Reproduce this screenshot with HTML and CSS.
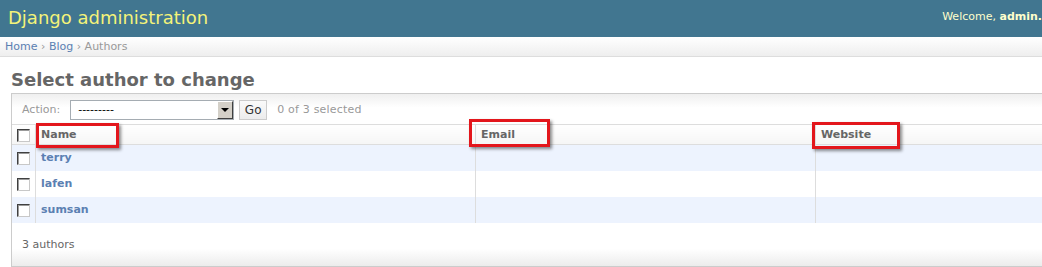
FILE: index.html
```html
<!DOCTYPE html>
<html lang="en">
<head>
    <meta charset="UTF-8">
    <title>Select author to change | Django site admin</title>
    <link rel="stylesheet" href="styles.css">
</head>
<body>
    <div class="header">
        <div class="branding">Django administration</div>
        <div class="user-tools">Welcome, <strong>admin.</strong></div>
    </div>
    <div class="breadcrumbs">
        <a href="#">Home</a> &rsaquo; <a href="#">Blog</a> &rsaquo; Authors
    </div>
    <div class="content">
        <h1>Select author to change</h1>
        <div class="module">
            <div class="actions">
                <span class="action-label">Action:</span>
                <span class="select">---------<span class="select-arrow"></span></span>
                <button class="go">Go</button>
                <span class="counter">0 of 3 selected</span>
            </div>
            <table class="result-list">
                <thead>
                    <tr>
                        <th class="col-check"><span class="checkbox"></span></th>
                        <th class="col-name">Name<span class="mark mark-name"></span></th>
                        <th class="col-email">Email<span class="mark mark-email"></span></th>
                        <th class="col-web">Website<span class="mark mark-web"></span></th>
                    </tr>
                </thead>
                <tbody>
                    <tr class="row1">
                        <td class="col-check"><span class="checkbox"></span></td>
                        <th><a href="#">terry</a></th>
                        <td></td>
                        <td></td>
                    </tr>
                    <tr class="row2">
                        <td class="col-check"><span class="checkbox"></span></td>
                        <th><a href="#">lafen</a></th>
                        <td></td>
                        <td></td>
                    </tr>
                    <tr class="row1">
                        <td class="col-check"><span class="checkbox"></span></td>
                        <th><a href="#">sumsan</a></th>
                        <td></td>
                        <td></td>
                    </tr>
                </tbody>
            </table>
            <p class="paginator">3 authors</p>
        </div>
    </div>
</body>
</html>
```

FILE: styles.css
```css
/* Base */
body {
    margin: 0;
    font-family: "DejaVu Sans", Verdana, sans-serif;
    font-size: 11px;
    color: #333;
    background: #fff;
    overflow: hidden;
}

a {
    color: #5b80b2;
    text-decoration: none;
}

/* Header */
.header {
    background: #417690;
    height: 37px;
    display: flex;
    justify-content: space-between;
    align-items: flex-start;
    overflow: hidden;
}

.branding {
    color: #f4f379;
    font-size: 18px;
    line-height: 22px;
    padding: 7px 0 0 8px;
}

.user-tools {
    color: #ffc;
    line-height: 13px;
    padding-top: 10px;
    white-space: nowrap;
}

/* Breadcrumbs */
.breadcrumbs {
    height: 19px;
    line-height: 19px;
    padding: 0 5px;
    color: #999;
    background: linear-gradient(#fff, #eee);
    border-bottom: 1px solid #ddd;
}

/* Content */
.content {
    padding: 12px 0 0 11px;
}

h1 {
    margin: 0 0 2px;
    font-size: 18px;
    line-height: 22px;
    color: #666;
}

.module {
    width: 1100px;
    border: 1px solid #ccc;
    border-right: none;
}

/* Actions bar */
.actions {
    display: flex;
    align-items: center;
    height: 30px;
    padding-left: 10px;
    border-bottom: 1px solid #ddd;
    background: linear-gradient(#efefef, #fff 45%);
    color: #999;
}

.action-label {
    margin-right: 10px;
}

.select {
    position: relative;
    box-sizing: border-box;
    width: 164px;
    height: 20px;
    line-height: 18px;
    padding-left: 7px;
    border: 1px solid #a5acb2;
    background: #fff;
    color: #000;
    margin-top: 2px;
}

.select-arrow {
    position: absolute;
    top: 0;
    right: 0;
    box-sizing: border-box;
    width: 16px;
    height: 18px;
    background: #d4d0c8;
    border-top: 1px solid #fff;
    border-left: 1px solid #fff;
    border-right: 1px solid #404040;
    border-bottom: 1px solid #404040;
}

.select-arrow::after {
    content: "";
    position: absolute;
    left: 3px;
    top: 6px;
    border-left: 4px solid transparent;
    border-right: 4px solid transparent;
    border-top: 4px solid #000;
}

.go {
    box-sizing: border-box;
    width: 28px;
    height: 20px;
    margin: 2px 0 0 5px;
    padding: 0;
    font-family: inherit;
    font-size: 12px;
    color: #333;
    background: linear-gradient(#fafafa, #ececec);
    border: 1px solid #ccc;
}

.counter {
    margin-left: 10px;
    letter-spacing: 0.2px;
}

/* Result table */
.result-list {
    width: 100%;
    border-collapse: collapse;
}

.result-list th,
.result-list td {
    padding: 0 5px;
    text-align: left;
    border-left: 1px solid #ddd;
    vertical-align: middle;
}

.result-list .col-check {
    width: 13px;
    border-left: none;
    padding: 0 5px 0 5px;
}

.result-list thead th {
    position: relative;
    height: 19px;
    color: #666;
    font-weight: bold;
    border-bottom: 1px solid #ddd;
    background: linear-gradient(#fff, #f5f5f5);
}

.result-list .col-name {
    width: 429px;
}

.result-list .col-email {
    width: 329px;
}

.result-list tbody tr {
    height: 26px;
}

.row1 {
    background: #edf3fe;
}

.row2 {
    background: #fff;
}

.result-list tbody th a {
    font-weight: bold;
}

.checkbox {
    display: block;
    box-sizing: border-box;
    width: 13px;
    height: 13px;
    margin-top: 1px;
    background: #fff;
    border-top: 1px solid #404040;
    border-left: 1px solid #404040;
    border-right: 1px solid #c8c8c8;
    border-bottom: 1px solid #c8c8c8;
    box-shadow: inset 1px 1px 0 #9a9a9a;
}

/* Red annotation boxes */
.mark {
    position: absolute;
    border: 3px solid #e3161c;
    box-shadow: 2px 2px 3px rgba(0, 0, 0, 0.45);
}

.mark-name {
    left: 0;
    top: -2px;
    width: 77px;
    height: 19px;
}

.mark-email {
    left: -7px;
    top: -6px;
    width: 75px;
    height: 22px;
}

.mark-web {
    left: -4px;
    top: -3px;
    width: 82px;
    height: 21px;
}

/* Footer */
.paginator {
    margin: 0;
    height: 43px;
    line-height: 43px;
    padding-left: 10px;
    color: #666;
    background: linear-gradient(#fff 60%, #ececec);
}
```
